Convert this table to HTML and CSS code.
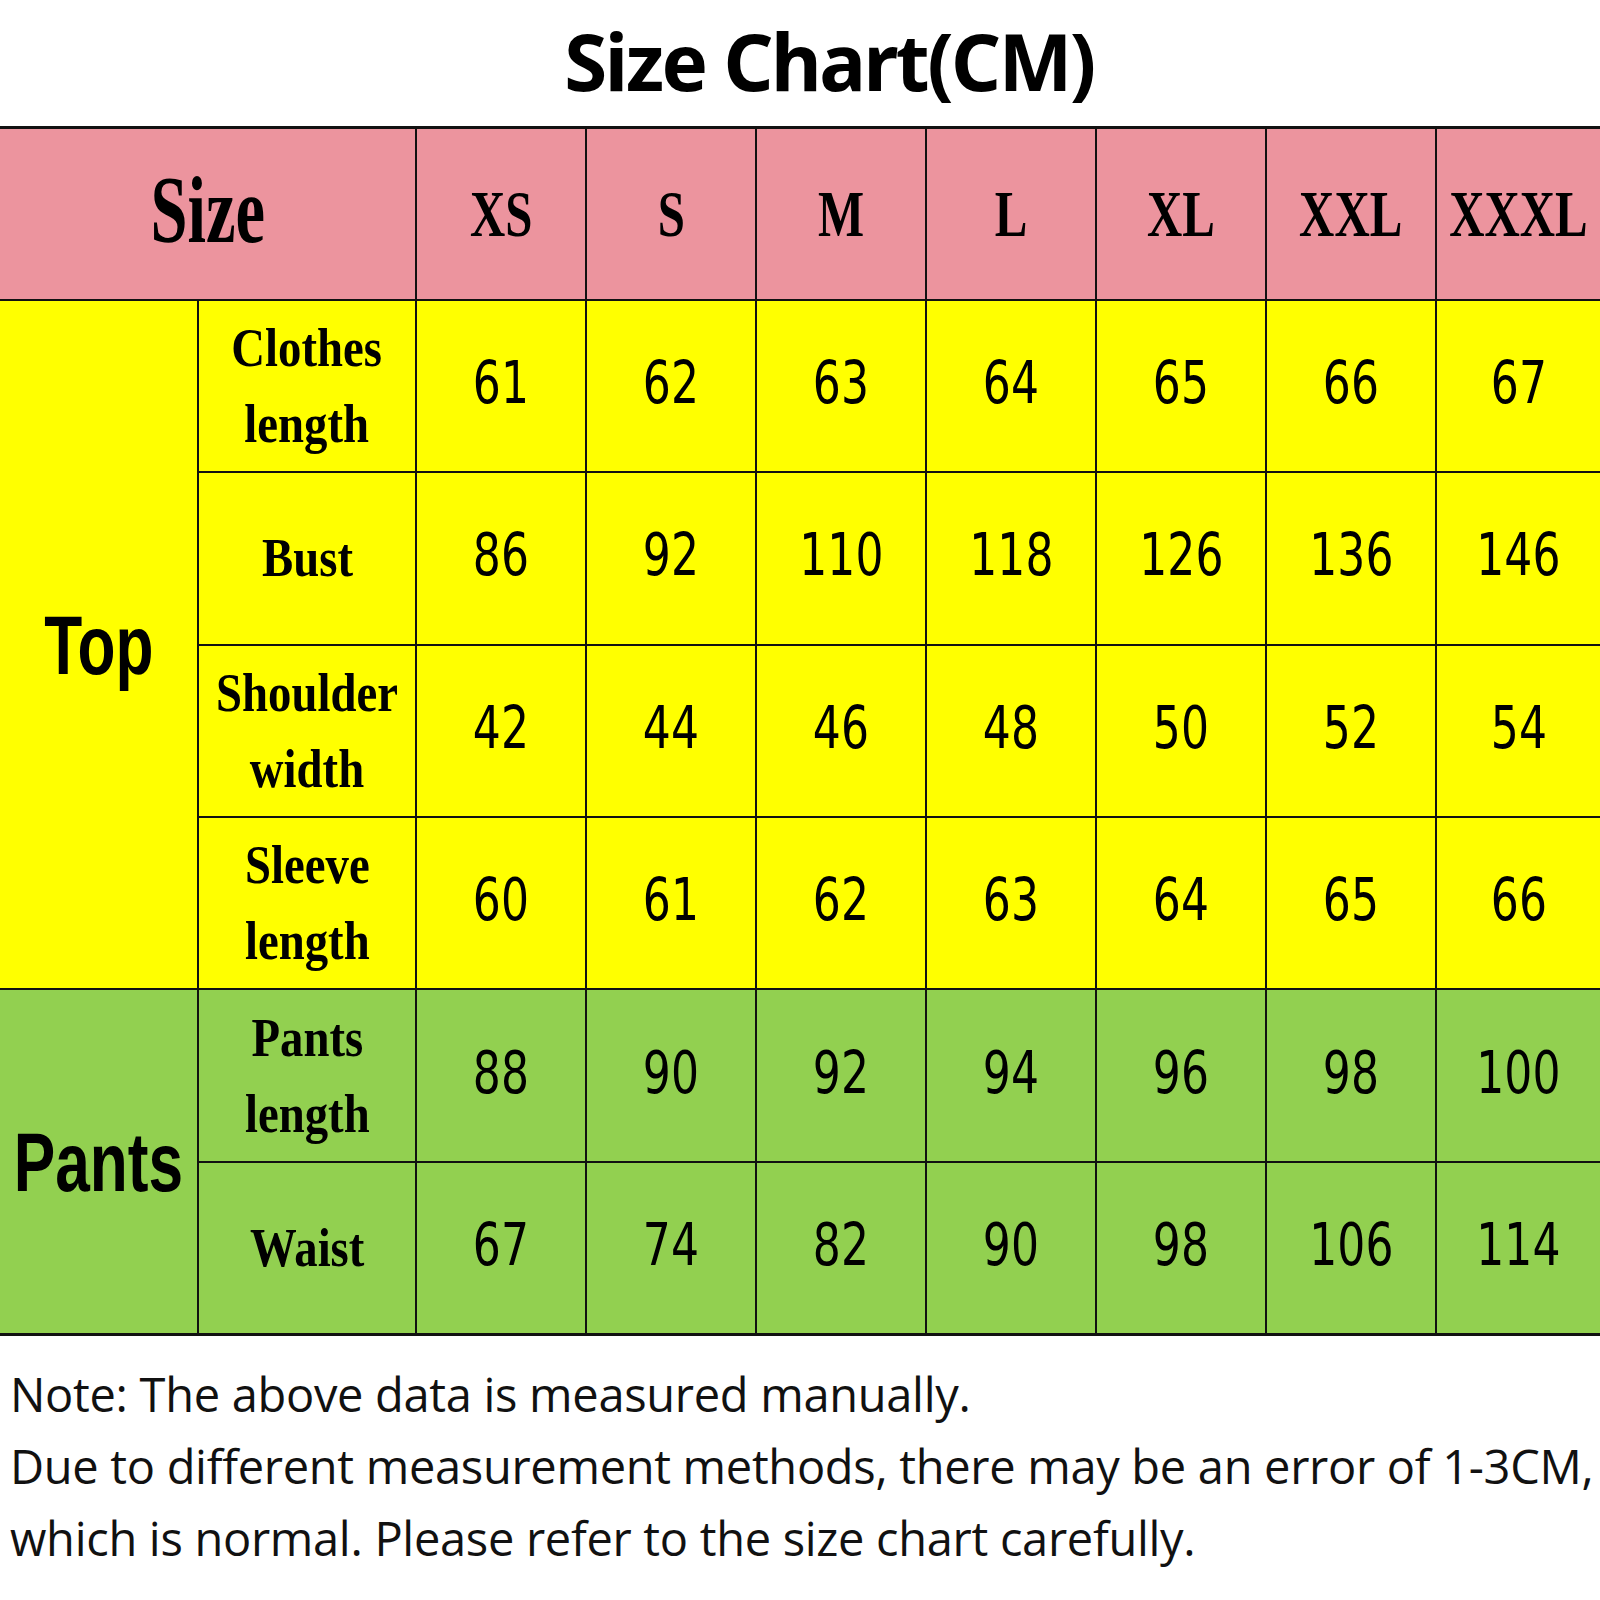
FILE: index.html
```html
<!DOCTYPE html>
<html lang="en">
<head>
<meta charset="utf-8">
<title>Size Chart(CM)</title>
<link rel="stylesheet" href="styles.css">
</head>
<body>
<h1 class="title">Size Chart(CM)</h1>
<table class="chart">
  <colgroup>
    <col class="col-group">
    <col class="col-label">
    <col class="col-size"><col class="col-size"><col class="col-size"><col class="col-size"><col class="col-size"><col class="col-size">
    <col class="col-last">
  </colgroup>
  <thead>
    <tr class="row head">
      <th colspan="2"><div class="cell"><span class="hd hd-big">Size</span></div></th>
      <th><div class="cell"><span class="hd">XS</span></div></th>
      <th><div class="cell"><span class="hd">S</span></div></th>
      <th><div class="cell"><span class="hd">M</span></div></th>
      <th><div class="cell"><span class="hd">L</span></div></th>
      <th><div class="cell"><span class="hd">XL</span></div></th>
      <th><div class="cell"><span class="hd">XXL</span></div></th>
      <th><div class="cell"><span class="hd">XXXL</span></div></th>
    </tr>
  </thead>
  <tbody class="top">
    <tr class="row">
      <th rowspan="4" class="group"><div class="cell"><span class="grp">Top</span></div></th>
      <th><div class="cell"><span class="lbl">Clothes<br>length</span></div></th>
      <td><div class="cell"><span class="num">61</span></div></td>
      <td><div class="cell"><span class="num">62</span></div></td>
      <td><div class="cell"><span class="num">63</span></div></td>
      <td><div class="cell"><span class="num">64</span></div></td>
      <td><div class="cell"><span class="num">65</span></div></td>
      <td><div class="cell"><span class="num">66</span></div></td>
      <td><div class="cell"><span class="num">67</span></div></td>
    </tr>
    <tr class="row">
      <th><div class="cell"><span class="lbl">Bust</span></div></th>
      <td><div class="cell"><span class="num">86</span></div></td>
      <td><div class="cell"><span class="num">92</span></div></td>
      <td><div class="cell"><span class="num">110</span></div></td>
      <td><div class="cell"><span class="num">118</span></div></td>
      <td><div class="cell"><span class="num">126</span></div></td>
      <td><div class="cell"><span class="num">136</span></div></td>
      <td><div class="cell"><span class="num">146</span></div></td>
    </tr>
    <tr class="row">
      <th><div class="cell"><span class="lbl">Shoulder<br>width</span></div></th>
      <td><div class="cell"><span class="num">42</span></div></td>
      <td><div class="cell"><span class="num">44</span></div></td>
      <td><div class="cell"><span class="num">46</span></div></td>
      <td><div class="cell"><span class="num">48</span></div></td>
      <td><div class="cell"><span class="num">50</span></div></td>
      <td><div class="cell"><span class="num">52</span></div></td>
      <td><div class="cell"><span class="num">54</span></div></td>
    </tr>
    <tr class="row">
      <th><div class="cell"><span class="lbl">Sleeve<br>length</span></div></th>
      <td><div class="cell"><span class="num">60</span></div></td>
      <td><div class="cell"><span class="num">61</span></div></td>
      <td><div class="cell"><span class="num">62</span></div></td>
      <td><div class="cell"><span class="num">63</span></div></td>
      <td><div class="cell"><span class="num">64</span></div></td>
      <td><div class="cell"><span class="num">65</span></div></td>
      <td><div class="cell"><span class="num">66</span></div></td>
    </tr>
  </tbody>
  <tbody class="pants">
    <tr class="row">
      <th rowspan="2" class="group"><div class="cell"><span class="grp">Pants</span></div></th>
      <th><div class="cell"><span class="lbl">Pants<br>length</span></div></th>
      <td><div class="cell"><span class="num">88</span></div></td>
      <td><div class="cell"><span class="num">90</span></div></td>
      <td><div class="cell"><span class="num">92</span></div></td>
      <td><div class="cell"><span class="num">94</span></div></td>
      <td><div class="cell"><span class="num">96</span></div></td>
      <td><div class="cell"><span class="num">98</span></div></td>
      <td><div class="cell"><span class="num">100</span></div></td>
    </tr>
    <tr class="row">
      <th><div class="cell"><span class="lbl">Waist</span></div></th>
      <td><div class="cell"><span class="num">67</span></div></td>
      <td><div class="cell"><span class="num">74</span></div></td>
      <td><div class="cell"><span class="num">82</span></div></td>
      <td><div class="cell"><span class="num">90</span></div></td>
      <td><div class="cell"><span class="num">98</span></div></td>
      <td><div class="cell"><span class="num">106</span></div></td>
      <td><div class="cell"><span class="num">114</span></div></td>
    </tr>
  </tbody>
</table>
<div class="note">
  <p>Note: The above data is measured manually.</p>
  <p>Due to different measurement methods, there may be an error of 1-3CM,</p>
  <p>which is normal. Please refer to the size chart carefully.</p>
</div>
</body>
</html>
```

FILE: styles.css
```css
html, body {
  margin: 0;
  padding: 0;
  background: #ffffff;
  overflow: hidden;
}

body {
  width: 1600px;
  color: #000;
  font-family: "Noto Sans", "Open Sans", sans-serif;
}

.title {
  margin: 0;
  height: 126px;
  box-sizing: border-box;
  padding: 22px 0 0 58px;
  text-align: center;
  font-family: "Noto Sans", "Open Sans", sans-serif;
  font-weight: 700;
  font-size: 78px;
  line-height: 78px;
  letter-spacing: -2.5px;
  color: #000;
}

.chart {
  width: 1600px;
  table-layout: fixed;
  border-collapse: collapse;
  border-top: 3px solid #111;
  border-bottom: 3px solid #111;
}

.col-group { width: 198px; }
.col-label { width: 218px; }
.col-size { width: 170px; }
.col-last { width: 164px; }

.chart th,
.chart td {
  padding: 0;
  border: 2px solid #111;
  font-weight: normal;
}

.chart tr > :first-child { border-left: none; }
.chart tr > :last-child { border-right: none; }

.row { height: 172.4px; }

.head th { background: #ec949e; }
.top th, .top td { background: #ffff00; }
.pants th, .pants td { background: #92d050; }

.cell {
  display: flex;
  align-items: center;
  justify-content: center;
  white-space: nowrap;
  text-align: center;
}

.hd {
  display: inline-block;
  font-family: "Liberation Serif", "Times New Roman", serif;
  font-weight: 700;
  font-size: 66px;
  line-height: 1;
  transform: scaleX(0.74);
}

.hd-big {
  font-size: 95px;
  transform: translateY(-3px) scaleX(0.7);
}

.lbl {
  display: inline-block;
  font-family: "Liberation Serif", "Times New Roman", serif;
  font-weight: 700;
  font-size: 55px;
  line-height: 76px;
  transform: scaleX(0.85);
}

.num {
  display: inline-block;
  font-family: "DejaVu Sans", sans-serif;
  font-size: 58px;
  line-height: 1;
  transform: translateY(-3px) scaleX(0.76);
}

.grp {
  display: inline-block;
  font-family: "Liberation Sans", Arial, sans-serif;
  font-weight: 700;
  font-size: 84px;
  line-height: 1;
  transform: scaleX(0.74);
}

.note {
  padding: 22px 0 0 10px;
  font-family: "Open Sans", "Noto Sans", sans-serif;
  font-size: 47px;
  line-height: 72px;
  letter-spacing: -0.3px;
  color: #111;
}

.note p {
  margin: 0;
  white-space: nowrap;
}
```
